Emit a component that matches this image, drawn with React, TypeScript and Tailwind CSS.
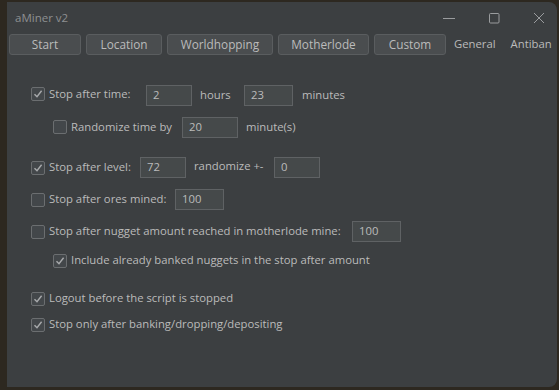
const font = { fontFamily: '"Open Sans", "Noto Sans", sans-serif' };

function Check({ checked }: { checked?: boolean }) {
  return (
    <div className="w-[14px] h-[14px] shrink-0 rounded-[2px] border border-[#6b6e70] bg-[#43474a] flex items-center justify-center">
      {checked && (
        <svg width="10" height="10" viewBox="0 0 10 10">
          <path d="M1.5 5.2 L4 7.8 L8.6 1.8" fill="none" stroke="#a8aaac" strokeWidth="1.4" />
        </svg>
      )}
    </div>
  );
}

function Field({ value, w }: { value: string; w: string }) {
  return (
    <div className={`${w} h-[21px] shrink-0 border border-[#5f6264] bg-[#45494a] pl-[6px] flex items-center text-[#bbbbbb]`}>
      {value}
    </div>
  );
}

function TabButton({ label, w }: { label: string; w: string }) {
  return (
    <div className={`${w} h-[21px] shrink-0 rounded-[3px] border border-[#5a5d5f] bg-[#4a4d4f] flex items-center justify-center text-[#bbbbbb]`}>
      {label}
    </div>
  );
}

export default function App() {
  return (
    <div className="w-[559px] h-[390px] bg-[#2d2820] pl-[7px] pt-[2px] pb-[3px] pr-[2px]" style={font}>
      <div className="h-full bg-[#3c3f41] rounded-tr-[8px] rounded-br-[8px] flex flex-col text-[11.3px] text-[#bbbbbb]">
        <div className="h-[32px] shrink-0 flex items-center pl-[8px] pr-[12px]">
          <span className="text-[11.5px] text-[#8d8f91]">aMiner v2</span>
          <div className="ml-auto flex items-center gap-[33px]">
            <svg width="13" height="12" viewBox="0 0 13 12">
              <path d="M0 6.5 H12" stroke="#9a9c9e" strokeWidth="1" />
            </svg>
            <svg width="11" height="11" viewBox="0 0 11 11">
              <rect x="0.5" y="0.5" width="9.5" height="9.5" rx="1" fill="none" stroke="#9a9c9e" />
            </svg>
            <svg width="12" height="12" viewBox="0 0 12 12">
              <path d="M1 1 L11 11 M11 1 L1 11" stroke="#9a9c9e" strokeWidth="1" />
            </svg>
          </div>
        </div>
        <div className="flex items-center pl-[2px] gap-[5px] text-[11.8px] whitespace-nowrap">
          <TabButton label="Start" w="w-[72px]" />
          <TabButton label="Location" w="w-[76px]" />
          <TabButton label="Worldhopping" w="w-[106px]" />
          <TabButton label="Motherlode" w="w-[91px]" />
          <TabButton label="Custom" w="w-[72px]" />
          <span className="ml-[3px] text-[11.3px]">General</span>
          <span className="ml-[10px] text-[11.3px]">Antiban</span>
        </div>

        <div className="flex flex-col pl-[24px]">
          <div className="mt-[30px] h-[21px] flex items-center">
            <div className="w-[115px] flex items-center gap-[4px] -mt-[3px]">
              <Check checked />
              <span>Stop after time:</span>
            </div>
            <Field value="2" w="w-[46px]" />
            <span className="w-[52px] pl-[8px]">hours</span>
            <Field value="23" w="w-[49px]" />
            <span className="ml-[9px]">minutes</span>
          </div>

          <div className="mt-[11px] h-[21px] flex items-center pl-[22px]">
            <div className="w-[129px] flex items-center gap-[4px] -mt-[1px]">
              <Check />
              <span>Randomize time by</span>
            </div>
            <Field value="20" w="w-[56px]" />
            <span className="ml-[8px]">minute(s)</span>
          </div>

          <div className="mt-[19px] h-[21px] flex items-center">
            <div className="w-[109px] flex items-center gap-[4px]">
              <Check checked />
              <span>Stop after level:</span>
            </div>
            <Field value="72" w="w-[46px]" />
            <span className="w-[88px] pl-[8px] -mt-[3px]">randomize +-</span>
            <Field value="0" w="w-[46px]" />
          </div>

          <div className="mt-[11px] h-[21px] flex items-center">
            <div className="w-[144px] flex items-center gap-[4px]">
              <Check />
              <span>Stop after ores mined:</span>
            </div>
            <Field value="100" w="w-[49px]" />
          </div>

          <div className="mt-[11px] h-[21px] flex items-center">
            <div className="w-[321px] flex items-center gap-[4px]">
              <Check />
              <span>Stop after nugget amount reached in motherlode mine:</span>
            </div>
            <Field value="100" w="w-[49px]" />
          </div>

          <div className="mt-[8px] h-[21px] flex items-center pl-[22px] gap-[4px]">
            <Check checked />
            <span>Include already banked nuggets in the stop after amount</span>
          </div>

          <div className="mt-[17px] h-[21px] flex items-center gap-[4px]">
            <Check checked />
            <span>Logout before the script is stopped</span>
          </div>

          <div className="mt-[5px] h-[21px] flex items-center gap-[4px]">
            <Check checked />
            <span>Stop only after banking/dropping/depositing</span>
          </div>
        </div>
      </div>
    </div>
  );
}
